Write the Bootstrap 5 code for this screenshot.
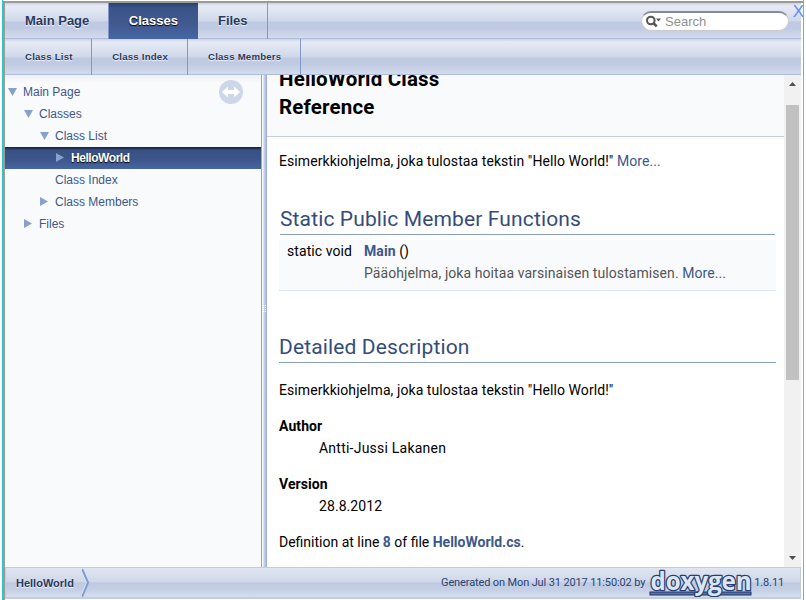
<!DOCTYPE html>
<html lang="fi">
<head>
<meta charset="utf-8">
<meta name="viewport" content="width=device-width, initial-scale=1">
<title>HelloWorld Class Reference</title>
<link rel="stylesheet" href="https://cdn.jsdelivr.net/npm/bootstrap@5.3.0/dist/css/bootstrap.min.css">
<style>
body{background:#fff;overflow:hidden;font:14px/22px Roboto,sans-serif;color:#000}
a{color:#3d578c;text-decoration:none}
.frame{height:600px;width:802px;margin-left:2px;border-left:1px solid #2ec5c0;border-right:1px solid #4cc6c6;padding-top:1px}
.window{border-left:2px solid #9b9b98;border-top:2px solid #9b9b98;height:599px;padding-right:2px;position:relative}
.tabbar{height:36px;background:linear-gradient(#c9d2e6 0,#e7ebf5 3px,#cfd8e9 50%,#bdc9e2 53%,#c0cbe3 70%,#d2daeb 96%,#aebcdb 97%);font-family:"Liberation Sans",Arial,sans-serif;font-weight:bold;font-size:13px;line-height:36px;text-shadow:0 1px 1px rgba(255,255,255,.9)}
.tabbar a{color:#283a5d;padding:0 19px 0 20px;height:36px;border-right:1px solid #8298ca;white-space:nowrap}
.tabbar a:first-child{padding-right:18.500px}
.tabbar a.active{color:#fff;padding-right:20px;background:linear-gradient(#293f6b,#3b5488 5px,#41598f 60%,#4666a6);text-shadow:0 1px 1px #000;border:0}
.tabbar.sub{font-size:9.600px;letter-spacing:.23px}
.search{width:148px;height:20px;border-radius:10px;background:#fff;border:1px solid #c9cbd0;border-top:2px solid #858b96;font:13px/18px "Liberation Sans",Arial,sans-serif;color:#909090;margin:8px 12px 0 0;text-shadow:none}
.close-x{right:-1px;top:-2px;font:17px/22px "Liberation Sans",Arial,sans-serif;color:#5b8cff}
.middle{height:492px}
.tree{width:256px;background:linear-gradient(#edf0f7,#f9fafc 8px);padding-top:6px;font:12px/22px "Liberation Sans",Arial,sans-serif;position:relative}
.tree .node{height:22px;color:#3d578c}
.tree svg{width:16px;height:22px;flex:none}
.tree .current{background:linear-gradient(#18284a 0,#18284a 1px,#3a5083 3px,#3c5488 50%,#4665a2);color:#fff;font-weight:bold;letter-spacing:-.45px;text-shadow:0 1px 1px #000}
.lv0{padding-left:2px}.lv1{padding-left:18px}.lv2{padding-left:34px}.lv3{padding-left:50px}
.sync{right:18px;top:5px}
.tree .sync svg{width:24px;height:24px;display:block}
.splitter{width:6px;background:linear-gradient(90deg,#8fa5d2 0 1px,#f5f7fb 1px 2px,#dce3f1 2px 3px,#c4cfe6 3px 4px,#b5c3e1 4px 5px,#9db0da 5px)}
.doc{width:517px;overflow:hidden;letter-spacing:.075px}
.doc-head{height:62px;background:#f9fafc;border-bottom:1px solid #c4cfe5;padding-left:12px}
.doc-head h1{font:bold 20.500px/28px Roboto,sans-serif;width:200px;margin:0;letter-spacing:.18px;position:relative;top:-10px}
.doc-body{padding:13px 8px 0 12px}
.doc-body p{margin:0}
h2.group{font:400 21px/32px Roboto,sans-serif;color:#354c7b;border-bottom:1px solid #879ecb;height:32px;margin:31px 0 0;letter-spacing:.13px}
h2.in-table{margin-left:1px;margin-right:1px}
.members{background:#f9fafc;border-bottom:1px solid #dee4f0;height:51px;margin-top:5px;padding-left:8px}
.members+h2.group{margin-top:40px}
.kind{width:77px}
.brief{color:#555}
dl{margin:14px 0 0}dd{margin:0 0 0 40px}
.author{letter-spacing:.23px}
.definition{letter-spacing:0}
.scroll{width:17px;background:#f1f1f1}
.scroll .thumb{width:13px;height:275px;background:#c1c1c1;margin:30px 0 0 2px}
.arrow-up,.arrow-down{left:5px;width:7px;height:4px;background:#505050}
.arrow-up{top:7px;clip-path:polygon(50% 0,100% 100%,0 100%)}
.arrow-down{bottom:7px;clip-path:polygon(0 0,100% 0,50% 100%)}
.footbar{height:32px;border:1px solid #c2cde4;border-bottom-width:2px;background:linear-gradient(#dfe5f1,#cfd8e9 48%,#bdc9e1 51%,#c5cfe5 75%,#d7dfed)}
.crumb{font:bold 11px/31px "Liberation Sans",Arial,sans-serif;color:#283a5d;padding-left:10px;text-shadow:0 1px 1px rgba(255,255,255,.9)}
.generated{font-size:11px;line-height:29px;color:#2a4373;padding-right:16px;letter-spacing:-.13px}
</style>
<script src="https://cdn.jsdelivr.net/npm/bootstrap@5.3.0/dist/js/bootstrap.bundle.min.js"></script>
</head>
<body>
<div class="frame">
<div class="window">
  <nav class="tabbar d-flex">
    <a href="#">Main Page</a><a href="#" class="active">Classes</a><a href="#">Files</a>
    <div class="search ms-auto d-flex align-items-center">
      <svg class="ms-1" width="19" height="16" viewBox="0 0 19 16"><circle cx="4.800" cy="6.500" r="3.800" fill="none" stroke="#555" stroke-width="2"/><path d="M7.700 9.300l3 3" stroke="#555" stroke-width="2.600"/><path d="M10 4.500h5l-2.500 3z" fill="#555"/></svg><span>Search</span>
    </div>
  </nav>
  <span class="close-x position-absolute">X</span>
  <nav class="tabbar sub d-flex"><a href="#">Class List</a><a href="#">Class Index</a><a href="#">Class Members</a></nav>
  <main class="middle d-flex">
    <aside class="tree">
      <div class="node lv0 d-flex"><svg><path d="M1 7h9l-4.500 8z" fill="#8aa0cc"/></svg><span>Main Page</span></div>
      <div class="node lv1 d-flex"><svg><path d="M1 7h9l-4.500 8z" fill="#8aa0cc"/></svg><span>Classes</span></div>
      <div class="node lv2 d-flex"><svg><path d="M1 7h9l-4.500 8z" fill="#8aa0cc"/></svg><span>Class List</span></div>
      <div class="node lv3 current d-flex"><svg><path d="M1 6v9l8-4.500z" fill="#8aa0cc"/></svg><span>HelloWorld</span></div>
      <div class="node lv3 d-flex"><span>Class Index</span></div>
      <div class="node lv2 d-flex"><svg><path d="M1 6v9l8-4.500z" fill="#8aa0cc"/></svg><span>Class Members</span></div>
      <div class="node lv1 d-flex"><svg><path d="M1 6v9l8-4.500z" fill="#8aa0cc"/></svg><span>Files</span></div>
      <div class="sync position-absolute"><svg viewBox="0 0 24 24"><circle cx="12" cy="12" r="12" fill="#ced7e9"/><path d="M3 12l6-5.500v3.500h6V6.500l6 5.500-6 5.500V14H9v3.500z" fill="#fff"/></svg></div>
    </aside>
    <div class="splitter d-flex align-items-center justify-content-end"><svg class="mb-4" width="4" height="8" viewBox="0 0 4 8" shape-rendering="crispEdges"><path d="M0 0h1v1H0zM2 0h1v1H2zM0 2h1v1H0zM2 2h1v1H2zM0 4h1v1H0zM2 4h1v1H2zM0 6h1v1H0zM2 6h1v1H2z" fill="#fff"/></svg></div>
    <article class="doc">
      <header class="doc-head overflow-hidden"><h1>HelloWorld Class Reference</h1></header>
      <div class="doc-body">
        <p>Esimerkkiohjelma, joka tulostaa tekstin "Hello World!" <a href="#">More...</a></p>
        <h2 class="group in-table">Static Public Member Functions</h2>
        <div class="members">
          <div class="d-flex"><span class="kind">static void</span><span><a href="#" class="fw-bold">Main</a> ()</span></div>
          <div class="d-flex"><span class="kind"></span><span class="brief">Pääohjelma, joka hoitaa varsinaisen tulostamisen. <a href="#">More...</a></span></div>
        </div>
        <h2 class="group">Detailed Description</h2>
        <p class="pt-3">Esimerkkiohjelma, joka tulostaa tekstin "Hello World!"</p>
        <dl><dt>Author</dt><dd class="author">Antti-Jussi Lakanen</dd></dl>
        <dl><dt>Version</dt><dd>28.8.2012</dd></dl>
        <dl class="definition">Definition at line <a href="#" class="fw-bold">8</a> of file <a href="#" class="fw-bold">HelloWorld.cs</a>.</dl>
      </div>
    </article>
    <div class="scroll position-relative"><div class="arrow-up position-absolute"></div><div class="thumb float-start"></div><div class="arrow-down position-absolute"></div></div>
  </main>
  <footer class="footbar d-flex">
    <span class="crumb">HelloWorld</span>
    <svg class="ms-2" width="9" height="29" viewBox="0 0 9 29"><path d="M-1 1l6 13.500L-1 29" fill="none" stroke="#eef2f9" stroke-width="1.500"/><path d="M0 1l6 13.500L0 29" fill="none" stroke="#7f9bd0" stroke-width="2"/></svg>
    <div class="generated ms-auto d-flex"><span>Generated on Mon Jul 31 2017 11:50:02 by</span>
      <svg class="ms-1" width="104" height="29" viewBox="0 0 104 29"><rect x="1" y="24" width="101" height="3" fill="#5373b4" stroke="#20355f"/><text x="1.500" y="22" textLength="101" lengthAdjust="spacingAndGlyphs" font-family="Open Sans, sans-serif" font-weight="bold" font-size="25" fill="#dce5f4" stroke="#263f70" stroke-width="2.600" stroke-linejoin="round" paint-order="stroke">doxygen</text></svg>
      <span>&hairsp;1.8.11</span></div>
  </footer>
</div>
</div>
</body>
</html>
